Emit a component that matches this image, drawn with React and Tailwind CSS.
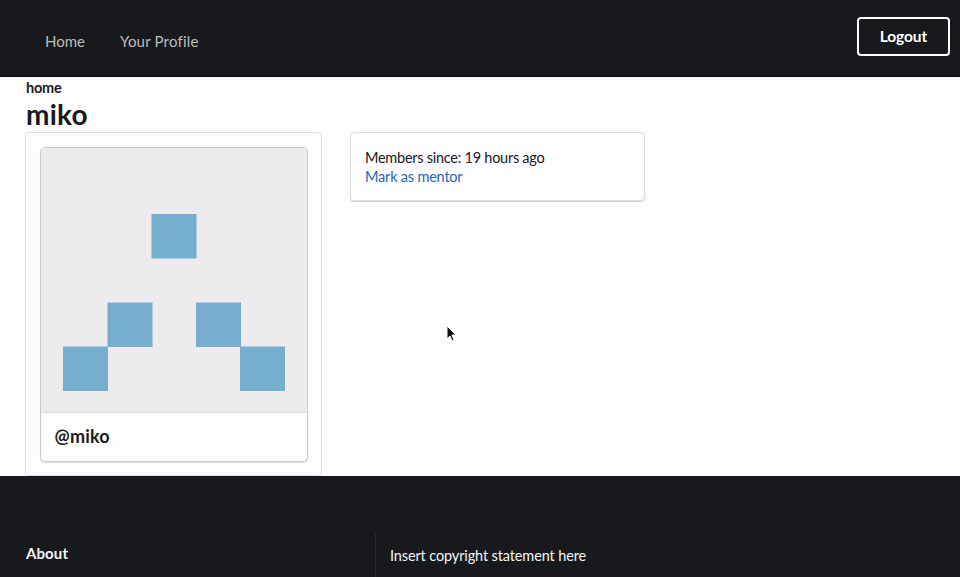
export default function App() {
  const squares = [[110.5, 66], [66.5, 154.5], [155, 154.5], [22, 198.5], [199, 198.5]];
  return (
    <div className="relative h-[577px] w-[960px] overflow-hidden bg-[#fdfcfe] font-['Lato',sans-serif] text-[14px] text-[#1a1a1c]">
      <header className="flex h-[77px] justify-between border-b border-[#09090b] bg-[#18191c] pr-[10px] pl-[45px] text-[#bdbdbf]">
        <nav className="flex gap-[35px] pt-[31px] text-[15px] leading-5">
          <a>Home</a>
          <a className="tracking-[0.2px]">Your Profile</a>
        </nav>
        <button className="mt-[17px] h-[39px] w-[93px] rounded-[4px] border-2 border-white text-[15.5px] font-bold tracking-[-0.1px] text-white">Logout</button>
      </header>
      <main className="h-[399px] overflow-hidden pl-[25px]">
        <div className="h-[22px] pt-px pl-px text-[14.5px] leading-5 font-bold tracking-[-0.2px]">home</div>
        <h1 className="h-[33px] pl-px text-[28px] leading-[31px] font-bold tracking-[0.2px]">miko</h1>
        <div className="flex items-start gap-[28px]">
          <section className="h-[344px] w-[297px] rounded-[4px] border border-[#dfdee0] p-[14px]">
            <div className="h-[315px] w-[268px] overflow-hidden rounded-[5px] border border-[#cac9cb] bg-[#fefefe] shadow-[0_1px_1px_#dcdcdc]">
              <svg className="block h-[264px] w-[266px] bg-[#edebee]" viewBox="0 0 266 264">
                {squares.map(([x, y]) => <rect key={x} x={x} y={y} width="45" height="44.5" fill="#77aecd" />)}
              </svg>
              <div className="border-t border-[#dad9db] px-[13.5px] pt-[11px] text-[18px] leading-6 font-bold tracking-[0.2px]">@miko</div>
            </div>
          </section>
          <section className="h-[69px] w-[295px] rounded-[4px] border border-[#dcdbdd] px-[14px] pt-[15px] text-[14.5px] leading-[19px] shadow-[0_1px_1px_#d0d0d0]">
            <div className="tracking-[-0.26px]">Members since: 19 hours ago</div>
            <a className="block tracking-[-0.2px] text-[#2569b3]">Mark as mentor</a>
          </section>
        </div>
      </main>
      <footer className="flex h-[101px] bg-[#18191c] pt-[57px] pl-[26px] text-[#f4f4f5]">
        <div className="w-[349px] pt-[10px] text-[15px] leading-5 font-bold tracking-[0.1px]">About</div>
        <div className="border-l border-[#29272b] pt-[13px] pl-[14px] text-[14.5px] leading-5 tracking-[-0.13px]">Insert copyright statement here</div>
      </footer>
      <svg className="absolute top-[325px] left-[446px] h-[18px] w-[11px]" viewBox="0 0 11 18">
        <path d="M1 1v13l3-3 2 5 2-1-2-5h4z" fill="#111" stroke="#fff" strokeWidth="1" />
      </svg>
    </div>
  );
}
